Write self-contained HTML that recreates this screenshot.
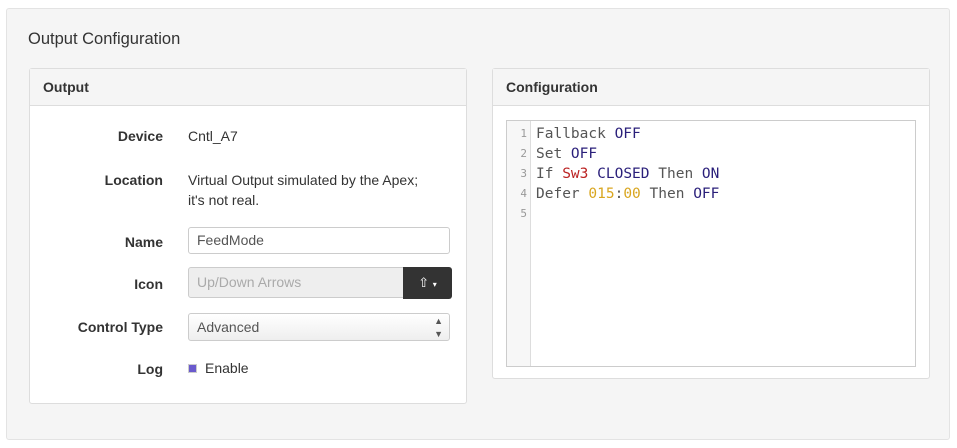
<!DOCTYPE html><html><head><style>
body{margin:0;width:957px;height:448px;background:#fff;font-family:"Liberation Sans",sans-serif;position:relative;overflow:hidden}
.outer{position:absolute;left:6px;top:8px;width:942px;height:430px;background:#f5f5f5;border:1px solid #e3e3e3;border-radius:3px}
.title{position:absolute;left:28px;top:30px;font-size:16.5px;color:#333}
.panel{position:absolute;background:#fff;border:1px solid #ddd;border-radius:3px}
.ph{height:36px;background:#f5f5f5;border-bottom:1px solid #ddd;font-weight:bold;font-size:14px;color:#333;line-height:36px;padding-left:13px}
.lbl{position:absolute;right:303px;font-weight:bold;font-size:14px;color:#333;text-align:right}
.val{position:absolute;left:158px;font-size:14px;color:#333;line-height:20px}
.inp{position:absolute;left:158px;width:262px;border:1px solid #ccc;border-radius:3px;font-size:14px;color:#555;padding-left:8px;box-sizing:border-box}
.code{position:absolute;left:13px;top:51px;width:408px;height:245px;border:1px solid #ccc;background:#fff;font-family:"DejaVu Sans Mono","Liberation Mono",monospace;font-size:14.5px}
.gut{position:absolute;left:0;top:0;width:24px;height:100%;background:#f7f7f7;border-right:1px solid #ddd;color:#999;text-align:right;font-size:11px;padding-top:3px;box-sizing:border-box}
.gut div{height:20px;line-height:20px;padding-right:3px}
.lines{position:absolute;left:29px;top:3px;color:#555}
.lines div{height:20px;line-height:20px}
.k{color:#2a1f7a}.r{color:#b22}.n{color:#d9a620}
</style></head><body>
<div class="outer"></div>
<div class="title">Output Configuration</div>
<div class="panel" style="left:29px;top:68px;width:436px;height:334px">
<div class="ph">Output</div>
<div class="lbl" style="top:59px">Device</div><div class="val" style="top:57px">Cntl_A7</div>
<div class="lbl" style="top:103px">Location</div><div class="val" style="top:101px">Virtual Output simulated by the Apex;<br>it's not real.</div>
<div class="lbl" style="top:165px">Name</div><div class="inp" style="top:158px;height:27px;line-height:25px">FeedMode</div>
<div class="lbl" style="top:207px">Icon</div><div class="inp" style="top:198px;width:216px;height:31px;line-height:29px;background:#eee;color:#aaa;border-radius:3px 0 0 3px">Up/Down Arrows</div>
<div style="position:absolute;left:373px;top:198px;width:49px;height:32px;background:#333;border-radius:0 3px 3px 0;color:#fff;font-size:13px;line-height:32px;text-align:center">⇧ <span style="font-size:8px">▾</span></div>
<div class="lbl" style="top:250px">Control Type</div><div class="inp" style="top:244px;height:28px;line-height:26px;background:linear-gradient(#fff,#eee)">Advanced<span style="position:absolute;right:6px;top:0;font-size:9px;color:#555;line-height:13px;padding-top:1px">▲<br>▼</span></div>
<div class="lbl" style="top:292px">Log</div><div class="val" style="top:289px"><span style="display:inline-block;width:7px;height:7px;background:#6a5acd;border:1px solid #ccc;margin:0 8px 2px 0;vertical-align:middle"></span>Enable</div>
</div>
<div class="panel" style="left:492px;top:68px;width:436px;height:309px">
<div class="ph">Configuration</div>
<div class="code"><div class="gut"><div>1</div><div>2</div><div>3</div><div>4</div><div>5</div></div>
<div class="lines"><div>Fallback <span class="k">OFF</span></div><div>Set <span class="k">OFF</span></div><div>If <span class="r">Sw3</span> <span class="k">CLOSED</span> Then <span class="k">ON</span></div><div>Defer <span class="n">015</span>:<span class="n">00</span> Then <span class="k">OFF</span></div></div></div>
</div>
</body></html>
